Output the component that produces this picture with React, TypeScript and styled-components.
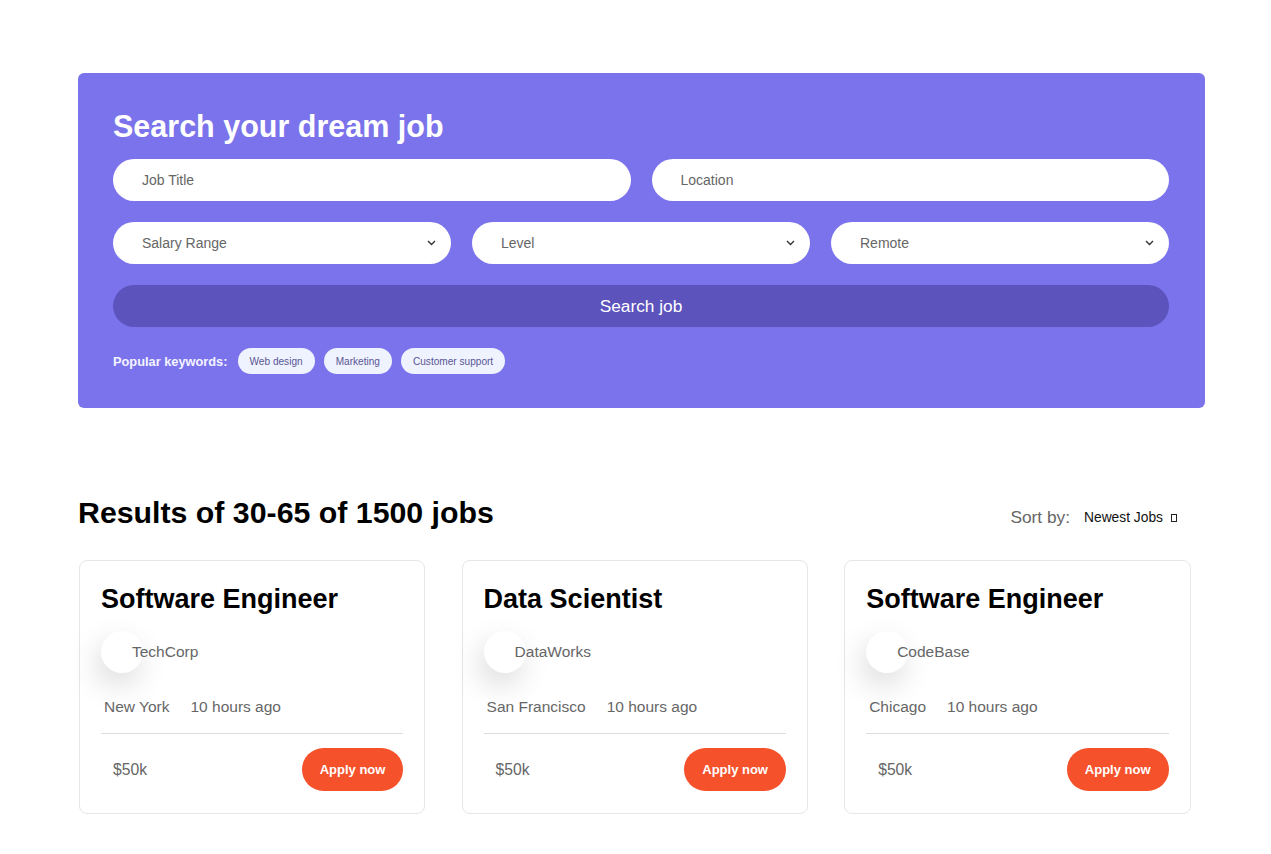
import React from "react";
import styled, { createGlobalStyle } from "styled-components";

const Global = createGlobalStyle`
  * { box-sizing: border-box; }
  body {
    margin: 0;
    background: #ffffff;
    font-family: "Liberation Sans", Arial, sans-serif;
  }
`;

const Page = styled.div`
  width: 1127px;
  margin-left: 78px;
  padding-top: 73px;
  padding-bottom: 40px;
`;

const Hero = styled.section`
  background: #7b73eb;
  border-radius: 6px;
  padding: 35px 36px 34px 35px;
  display: flex;
  flex-direction: column;
`;

const HeroTitle = styled.h1`
  margin: 0 0 15px;
  color: #ffffff;
  font-size: 30.5px;
  line-height: 36px;
  font-weight: 700;
`;

const Rows = styled.div`
  display: flex;
  flex-direction: column;
  gap: 21px;
`;

const Row = styled.div<{ $cols: number }>`
  display: grid;
  grid-template-columns: repeat(${(p) => p.$cols}, 1fr);
  gap: 21px;
`;

const Field = styled.input`
  height: 42px;
  border: none;
  outline: none;
  border-radius: 21px;
  background: #ffffff;
  padding: 0 29px;
  font-family: "Liberation Sans", Arial, sans-serif;
  font-size: 14px;
  color: #333;
  &::placeholder { color: #666; }
`;

const SelectBox = styled.div`
  height: 42px;
  border-radius: 21px;
  background: #ffffff;
  padding: 0 15px 0 29px;
  display: flex;
  align-items: center;
  justify-content: space-between;
  font-size: 14px;
  color: #666;
`;

const SearchButton = styled.button`
  height: 42px;
  border: none;
  border-radius: 21px;
  background: #5c53bd;
  color: #ffffff;
  font-family: "Liberation Sans", Arial, sans-serif;
  font-size: 17.3px;
  cursor: pointer;
`;

const Keywords = styled.div`
  display: flex;
  align-items: center;
  gap: 9px;
  height: 26px;
`;

const KeywordLabel = styled.span`
  color: #f4f4ff;
  font-size: 12.8px;
  font-weight: 700;
  margin-right: 1px;
`;

const Chip = styled.span`
  height: 26px;
  padding: 0 12px;
  border-radius: 13px;
  background: #eef3ff;
  color: #5b5594;
  font-size: 10.1px;
  display: inline-flex;
  align-items: center;
`;

const ResultsHead = styled.div`
  margin-top: 87px;
  display: flex;
  align-items: center;
  justify-content: space-between;
`;

const ResultsTitle = styled.h2`
  margin: 0;
  font-size: 30.3px;
  line-height: 36px;
  font-weight: 700;
  color: #000;
`;

const Sort = styled.div`
  display: flex;
  align-items: center;
  margin-right: 28px;
  margin-top: 8px;
`;

const SortLabel = styled.span`
  font-size: 17.3px;
  color: #666;
  margin-right: 14px;
`;

const SortValue = styled.span`
  font-size: 13.8px;
  color: #111;
`;

const Tofu = styled.span`
  display: inline-block;
  width: 6px;
  height: 8px;
  border: 1px solid #222;
  margin-left: 8px;
  margin-top: 2px;
`;

const Cards = styled.div`
  margin-top: 29px;
  display: grid;
  grid-template-columns: repeat(3, 346.4px);
  column-gap: 36.2px;
  margin-left: 1px;
`;

const Card = styled.article`
  border: 1px solid #e6e6e6;
  border-radius: 8px;
  padding: 22px 21px 22px;
  display: flex;
  flex-direction: column;
  background: #fff;
`;

const CardTitle = styled.h3`
  margin: 0;
  font-size: 27px;
  line-height: 32px;
  font-weight: 700;
  color: #000;
`;

const Company = styled.div`
  margin-top: 16px;
  display: flex;
  align-items: center;
`;

const Logo = styled.div`
  width: 42px;
  height: 42px;
  border-radius: 50%;
  background: #ffffff;
  box-shadow: -4px 12px 30px rgba(0, 0, 0, 0.15);
  margin-right: -11px;
  flex-shrink: 0;
`;

const CompanyName = styled.span`
  font-size: 15.5px;
  color: #666;
`;

const Meta = styled.div`
  margin-top: 25px;
  padding-left: 3px;
  display: flex;
  gap: 21px;
  font-size: 15.5px;
  line-height: 18px;
  color: #666;
`;

const Divider = styled.hr`
  margin: 17px 0 0;
  border: none;
  border-top: 1px solid #dcdcdc;
`;

const Footer = styled.div`
  margin-top: 14px;
  display: flex;
  align-items: center;
  justify-content: space-between;
`;

const Price = styled.span`
  padding-left: 12px;
  font-size: 15.7px;
  color: #666;
`;

const Apply = styled.button`
  height: 43px;
  padding: 0 18px;
  border: none;
  border-radius: 22px;
  background: #f5512b;
  color: #fff;
  font-family: "Liberation Sans", Arial, sans-serif;
  font-size: 13px;
  font-weight: 700;
  cursor: pointer;
`;

const Chevron = () => (
  <svg width="9" height="6" viewBox="0 0 9 6" fill="none">
    <polyline points="1,1 4.5,4.5 8,1" stroke="#333" strokeWidth="1.4" />
  </svg>
);

const jobs = [
  { title: "Software Engineer", company: "TechCorp", city: "New York" },
  { title: "Data Scientist", company: "DataWorks", city: "San Francisco" },
  { title: "Software Engineer", company: "CodeBase", city: "Chicago" },
];

export default function App() {
  return (
    <>
      <Global />
      <Page>
        <Hero>
          <HeroTitle>Search your dream job</HeroTitle>
          <Rows>
            <Row $cols={2}>
              <Field placeholder="Job Title" />
              <Field placeholder="Location" />
            </Row>
            <Row $cols={3}>
              {["Salary Range", "Level", "Remote"].map((s) => (
                <SelectBox key={s}>
                  <span>{s}</span>
                  <Chevron />
                </SelectBox>
              ))}
            </Row>
            <SearchButton>Search job</SearchButton>
            <Keywords>
              <KeywordLabel>Popular keywords:</KeywordLabel>
              <Chip>Web design</Chip>
              <Chip>Marketing</Chip>
              <Chip>Customer support</Chip>
            </Keywords>
          </Rows>
        </Hero>

        <ResultsHead>
          <ResultsTitle>Results of 30-65 of 1500 jobs</ResultsTitle>
          <Sort>
            <SortLabel>Sort by:</SortLabel>
            <SortValue>Newest Jobs</SortValue>
            <Tofu />
          </Sort>
        </ResultsHead>

        <Cards>
          {jobs.map((j, i) => (
            <Card key={i}>
              <CardTitle>{j.title}</CardTitle>
              <Company>
                <Logo />
                <CompanyName>{j.company}</CompanyName>
              </Company>
              <Meta>
                <span>{j.city}</span>
                <span>10 hours ago</span>
              </Meta>
              <Divider />
              <Footer>
                <Price>$50k</Price>
                <Apply>Apply now</Apply>
              </Footer>
            </Card>
          ))}
        </Cards>
      </Page>
    </>
  );
}
